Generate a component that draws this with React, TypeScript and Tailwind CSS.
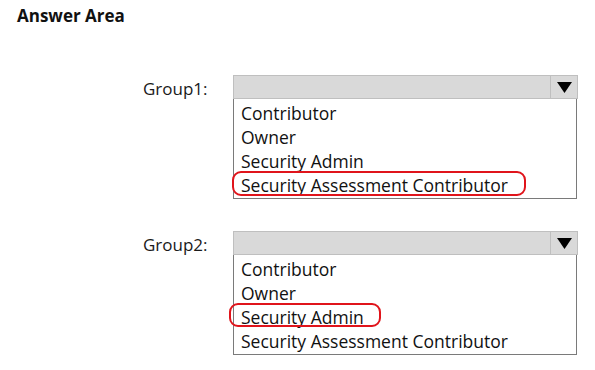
const items = ["Contributor", "Owner", "Security Admin", "Security Assessment Contributor"];

function Dropdown({ label, mark }: { label: string; mark: { left: number; top: number; w: number; h: number } }) {
  return (
    <div className="flex items-start">
      <div className="w-[90px] h-[28px] flex items-center text-[17px] text-[#1a1a1a]">{label}</div>
      <div className="w-[345px]">
        <div className="h-[24px] bg-[#d9d9d9] border border-[#bfbfbf] flex justify-end">
          <div className="w-[27px] border-l border-[#bfbfbf] flex items-center justify-center">
            <svg width="15" height="11" viewBox="0 0 15 11">
              <path d="M0 0 H15 L7.5 11 Z" fill="#000" />
            </svg>
          </div>
        </div>
        <div className="relative w-[344px] border border-t-0 border-[#7a7a7a] pl-[7px] pt-[2px] pb-[1px]">
          {items.map((it) => (
            <div key={it} className="h-[24px] leading-[24px] text-[17.5px] text-[#111]">
              {it}
            </div>
          ))}
          <div
            className="absolute border-2 border-[#e0141b] rounded-[9px]"
            style={{ left: mark.left, top: mark.top, width: mark.w, height: mark.h }}
          />
        </div>
      </div>
    </div>
  );
}

export default function App() {
  return (
    <div className="w-[595px] h-[370px] bg-white relative overflow-hidden" style={{ fontFamily: '"Open Sans", "Noto Sans", sans-serif' }}>
      <h1 className="pl-[17px] pt-[4px] leading-[24px] text-[17px] font-bold text-[#111]">Answer Area</h1>
      <div className="pl-[143px] pt-[47px]">
        <Dropdown label="Group1:" mark={{ left: -2, top: 72, w: 294, h: 25 }} />
        <div className="h-[32px]" />
        <Dropdown label="Group2:" mark={{ left: -5, top: 48, w: 152, h: 24 }} />
      </div>
    </div>
  );
}
